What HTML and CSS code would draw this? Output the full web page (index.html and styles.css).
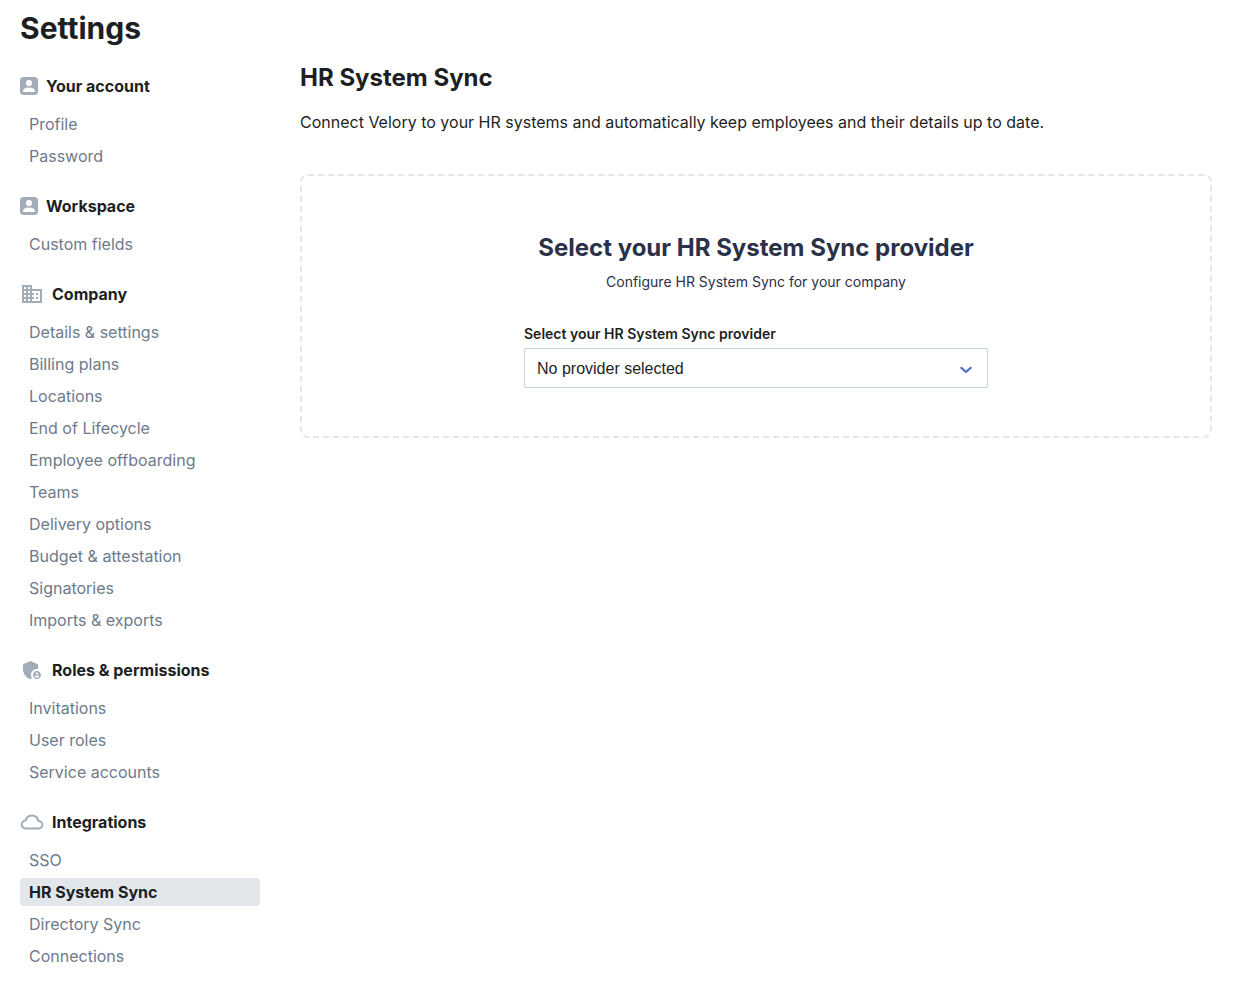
FILE: index.html
```html
<!DOCTYPE html>
<html lang="en">
<head>
  <meta charset="UTF-8"/>
  <meta name="viewport" content="width=device-width, initial-scale=1"/>
  <title>Settings - HR System Sync</title>
  <link rel="stylesheet" href="styles.css">
</head>
<body>
  <div class="page">
    <aside class="sidebar">
      <h1>Settings</h1>
      <nav class="menu">
        <section class="menu-group">
          <h3>
            <svg class="icon-small" viewBox="0 0 18 18" aria-hidden="true"><rect width="18" height="18" rx="3.500"/><circle class="cutout" cx="9" cy="6" r="3.100"/><path class="cutout" d="M3 14.200c0-2.300 2.600-3.700 6-3.700s6 1.400 6 3.700c0 .5-.3.800-.8.800H3.800c-.5 0-.8-.3-.8-.8z"/></svg>
            Your account
          </h3>
          <a href="#">Profile</a>
          <a href="#">Password</a>
        </section>
        <section class="menu-group">
          <h3>
            <svg class="icon-small" viewBox="0 0 18 18" aria-hidden="true"><rect width="18" height="18" rx="3.500"/><circle class="cutout" cx="9" cy="6" r="3.100"/><path class="cutout" d="M3 14.200c0-2.300 2.600-3.700 6-3.700s6 1.400 6 3.700c0 .5-.3.800-.8.800H3.800c-.5 0-.8-.3-.8-.8z"/></svg>
            Workspace
          </h3>
          <a href="#">Custom fields</a>
        </section>
        <section class="menu-group">
          <h3>
            <svg class="icon" viewBox="0 0 24 24" aria-hidden="true"><path d="M12 7V3H2v18h20V7H12zM6 19H4v-2h2v2zm0-4H4v-2h2v2zm0-4H4V9h2v2zm0-4H4V5h2v2zm4 12H8v-2h2v2zm0-4H8v-2h2v2zm0-4H8V9h2v2zm0-4H8V5h2v2zm10 12h-8v-2h2v-2h-2v-2h2v-2h-2V9h8v10zm-2-8h-2v2h2v-2zm0 4h-2v2h2v-2z"/></svg>
            Company
          </h3>
          <a href="#">Details &amp; settings</a>
          <a href="#">Billing plans</a>
          <a href="#">Locations</a>
          <a href="#">End of Lifecycle</a>
          <a href="#">Employee offboarding</a>
          <a href="#">Teams</a>
          <a href="#">Delivery options</a>
          <a href="#">Budget &amp; attestation</a>
          <a href="#">Signatories</a>
          <a href="#">Imports &amp; exports</a>
        </section>
        <section class="menu-group">
          <h3>
            <svg class="icon" viewBox="0 0 24 24" aria-hidden="true"><path d="M17 11c.34 0 .67.040 1 .090V6.270L10.500 3 3 6.270v4.910c0 4.540 3.200 8.790 7.500 9.820.550-.130 1.080-.320 1.600-.550-.690-.980-1.100-2.170-1.100-3.450 0-3.310 2.690-6 6-6z"/><path d="M17 13c-2.210 0-4 1.790-4 4s1.790 4 4 4 4-1.790 4-4-1.790-4-4-4zm0 1.380c.620 0 1.120.510 1.120 1.120s-.510 1.120-1.120 1.120-1.120-.510-1.120-1.120.500-1.120 1.120-1.120zm0 5.370c-.930 0-1.740-.460-2.240-1.170.050-.720 1.510-1.080 2.240-1.080s2.190.360 2.240 1.080c-.500.710-1.310 1.170-2.240 1.170z"/></svg>
            Roles &amp; permissions
          </h3>
          <a href="#">Invitations</a>
          <a href="#">User roles</a>
          <a href="#">Service accounts</a>
        </section>
        <section class="menu-group">
          <h3>
            <svg class="icon icon-line" viewBox="0 0 24 24" aria-hidden="true"><path d="M18.500 18.500H6a4 4 0 0 1-.500-8C6.400 7.500 9 5.500 12 5.500c3.300 0 5.700 2.300 6.300 5.500h.4a3.750 3.750 0 0 1-.2 7.500z"/></svg>
            Integrations
          </h3>
          <a href="#">SSO</a>
          <a href="#" class="active" aria-current="page">HR System Sync</a>
          <a href="#">Directory Sync</a>
          <a href="#">Connections</a>
        </section>
      </nav>
    </aside>

    <main class="content">
      <h2>HR System Sync</h2>
      <p class="intro">Connect Velory to your HR systems and automatically keep employees and their details up to date.</p>
      <div class="provider-box">
        <h2>Select your HR System Sync provider</h2>
        <p>Configure HR System Sync for your company</p>
        <form class="provider-form">
          <label for="provider">Select your HR System Sync provider</label>
          <div class="select-wrap">
            <select id="provider">
              <option>No provider selected</option>
            </select>
            <svg class="chevron" viewBox="0 0 12 8" aria-hidden="true"><path d="M.7 1.200L6 6l5.300-4.800"/></svg>
          </div>
        </form>
      </div>
    </main>
  </div>
</body>
</html>
```

FILE: styles.css
```css
* { box-sizing: border-box; }
body { margin: 0; background: #fff; color: #1d1f23; font-family: Inter, "Liberation Sans", sans-serif; font-size: 16px; line-height: 24px; font-variant-ligatures: none; }
h1, h2, h3, p { margin: 0; }
.page { display: flex; gap: 40px; padding: 8px 22px 16px 20px; }

/* sidebar */
.sidebar { flex: 0 0 240px; }
h1 { font-size: 30px; line-height: 40px; font-weight: 700; }
.menu { display: flex; flex-direction: column; gap: 24px; margin-top: 26px; }
.menu-group { display: flex; flex-direction: column; gap: 4px; }
.menu-group h3 { display: flex; align-items: center; gap: 8px; margin-bottom: 8px; font-size: 16px; line-height: 24px; font-weight: 700; }
.menu-group a { padding: 2px 9px; border-radius: 4px; color: #6d7a8c; text-decoration: none; }
.menu-group a:hover { color: #1d1f23; }
.menu-group a.active { background: #e1e7eb; color: #1d1f23; font-weight: 700; }
.icon { width: 24px; height: 24px; fill: #a3adba; }
.icon-small { width: 18px; height: 18px; fill: #a3adba; }
.icon-small .cutout { fill: #fff; }
.icon-line { fill: none; stroke: #a3adba; stroke-width: 2; }

/* content */
.content { flex: 1; min-width: 0; padding-top: 54px; }
h2 { font-size: 24px; line-height: 32px; font-weight: 700; }
.intro { margin-top: 16px; }
.provider-box { margin-top: 40px; padding: 56px 20px 48px; border: 2px dashed #e1e7eb; border-radius: 8px; text-align: center; }
.provider-box h2 { color: #2a3148; }
.provider-box p { margin-top: 8px; color: #2a3148; font-size: 14px; line-height: 20px; }
.provider-form { max-width: 464px; margin: 32px auto 0; text-align: left; }
.provider-form label { display: block; margin-bottom: 4px; font-size: 14px; line-height: 20px; font-weight: 600; }
.select-wrap { position: relative; }
select {
  display: block; width: 100%; height: 40px; padding: 0 40px 0 12px; border: 1px solid #cbd3dd; border-radius: 2px;
  background: #fff; color: #1d1f23; font-family: "Liberation Sans", Arial, sans-serif; font-size: 16px; appearance: none; cursor: pointer;
}
select:focus { border-color: #4468d0; outline: none; }
.chevron { position: absolute; right: 16px; top: 18px; width: 12px; height: 8px; fill: none; stroke: #4468d0; stroke-width: 2; pointer-events: none; }
```
